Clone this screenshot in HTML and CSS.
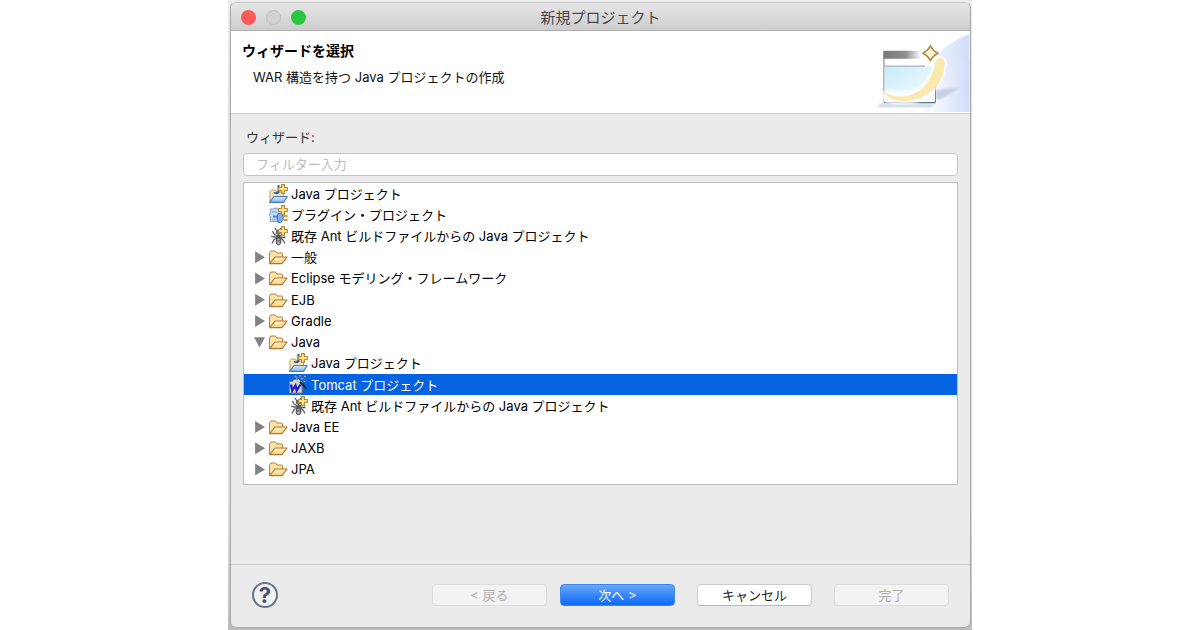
FILE: index.html
```html
<!DOCTYPE html>
<html lang="ja">
<head>
<meta charset="utf-8">
<meta name="viewport" content="width=device-width, initial-scale=1">
<title>新規プロジェクト</title>
<link rel="stylesheet" href="styles.css">
</head>
<body>
<svg class="defs" aria-hidden="true">
  <defs>
    <linearGradient id="gold" x1="0" y1="0" x2="0" y2="1"><stop offset="0" stop-color="#fff3cb"/><stop offset="1" stop-color="#f6cf7d"/></linearGradient>
    <linearGradient id="sky" x1="0" y1="0" x2="0" y2="1"><stop offset="0" stop-color="#d8eafc"/><stop offset="1" stop-color="#87b4ee"/></linearGradient>
    <symbol id="folder" viewBox="0 0 20 20">
      <path d="M1.500 16V6L3 4h4.500L9 6h4.500q1 0 1 1v3" fill="#fae3a8" stroke="#b7813b" stroke-linejoin="round"/>
      <path d="M1.700 16.700L7 10H19L14 16.700z" fill="url(#gold)" stroke="#b5772e" stroke-width="1.200" stroke-linejoin="round"/>
    </symbol>
    <symbol id="plus" viewBox="0 0 9 9">
      <path d="M3.200.6h2.600v2.600h2.600v2.600H5.800v2.600H3.200V5.800H.6V3.200h2.600z" fill="#ffe48c" stroke="#b98a30" stroke-linejoin="round"/>
    </symbol>
    <symbol id="java" viewBox="0 0 20 20">
      <path d="M2 17.500V7.500L3.500 6h4L9 8h6.500v5" fill="#fbe5b1" stroke="#c19a62"/>
      <path d="M1.500 18.300L6 12.500H19.300L15.500 18.300z" fill="url(#sky)" stroke="#4a7cc4" stroke-width="1.200" stroke-linejoin="round"/>
      <path d="M10.500 1v6q0 2.300-2 2.300-1.600 0-2.200-1.200" fill="none" stroke="#286496" stroke-width="2"/>
      <use href="#plus" x="10" y="0" width="10" height="10"/>
    </symbol>
    <symbol id="plugin" viewBox="0 0 20 20">
      <path d="M2.500 16.500V12q-2-1-.5-3l.5-5H6q2-2.500 4 0h4v12.500z" fill="#c2dbf6" stroke="#7b9dcc"/>
      <path d="M4 7h7M4 14.500h5" stroke="#9dc1ec" stroke-width="2"/>
      <path d="M5 11.500h5" stroke="#4b7fbe" stroke-width="2"/>
      <path d="M10 8.500h2.500q3 1 3 4t-3 5H10q-1.500-4.500 0-9z" fill="#79aff0" stroke="#4079bd"/>
      <path d="M15.500 11h4M15.500 15h4" stroke="#cf9a36" stroke-width="2"/>
      <use href="#plus" x="10" y="0" width="10" height="10"/>
    </symbol>
    <symbol id="ant" viewBox="0 0 20 20">
      <path d="M9.500 6L7 2M11 6l2-4M9.500 10L6 8 4.500 5M11.500 10l4-1 1.500 1M9.500 11L6 11 3 10M11.500 11.500h6M9.500 12L6 13.500 4 17.500M12 12l3 2 2 3.500" fill="none" stroke="#5c5c5c" stroke-width="1.300"/>
      <ellipse cx="10.500" cy="6.300" rx="2.300" ry="1.900" fill="#777" stroke="#444" stroke-width=".7"/>
      <ellipse cx="10.500" cy="10.500" rx="1.600" ry="2.200" fill="#555"/>
      <ellipse cx="10.500" cy="15.500" rx="2.400" ry="3.300" fill="#b0b0b0" stroke="#4b4b4b"/>
      <path d="M8.500 15h4" stroke="#4b4b4b"/>
      <use href="#plus" x="10" y="0" width="10" height="10"/>
    </symbol>
    <symbol id="tomcat" viewBox="0 0 20 20">
      <path d="M1.500 18V6.500h3L6 4.500h3L10.500 6.500H14V18z" fill="#dcd6cf" stroke="#92816b"/>
      <path d="M3 9.500l1.300 6L7.500 10.500l1.200 5L12.500 9.500" fill="none" stroke="#1b1bd0" stroke-width="2.300"/>
      <path d="M9.500 4.500l9 9" stroke="#27303d" stroke-width="2.400"/>
      <path d="M9.500 4.500l2.500 2.500" stroke="#dfe7f2" stroke-width="2"/>
      <path d="M13 3.500h2M16 1.500h2M12 0v2M6.500 1.500h2M15.500 6.500h2M8 3h1.500" stroke="#aaa18d" stroke-width="1.400"/>
    </symbol>
  </defs>
</svg>
<div class="desktop">
<main class="window">
  <header class="titlebar">
    <div class="lights">
      <button class="light close" aria-label="閉じる"></button>
      <button class="light minimize" aria-label="最小化" disabled></button>
      <button class="light expand" aria-label="拡大"></button>
    </div>
    <h1 class="title">新規プロジェクト</h1>
  </header>
  <section class="banner">
    <div class="banner-text">
      <h2 class="heading">ウィザードを選択</h2>
      <p class="description">WAR 構造を持つ Java プロジェクトの作成</p>
    </div>
    <svg class="banner-art" viewBox="0 0 94 83" aria-hidden="true">
      <defs>
        <linearGradient id="haze" x1="0" y1="0" x2="1" y2="0"><stop offset="0" stop-color="#fff"/><stop offset="1" stop-color="#d0dcf7"/></linearGradient>
        <linearGradient id="bar" x1="0" y1="0" x2="1" y2="0"><stop offset="0" stop-color="#777"/><stop offset=".5" stop-color="#8e8e8e"/><stop offset=".85" stop-color="#fff"/></linearGradient>
        <linearGradient id="pane" x1="0" y1="0" x2="1" y2="1"><stop offset="0" stop-color="#c6ebfb"/><stop offset="1" stop-color="#f8fdff"/></linearGradient>
        <filter id="soft" x="-20%" y="-20%" width="140%" height="140%"><feGaussianBlur stdDeviation="1"/></filter>
      </defs>
      <path d="M94 3Q68 13 56 31L42 82H94z" fill="url(#haze)"/>
      <path d="M94 27Q70 35 60 54l-7 28H94z" fill="url(#haze)" opacity=".6"/>
      <path d="M60 60l25-3-20 12H60zM2 74h58l-6 3H2z" fill="#bac3dc" opacity=".7" filter="url(#soft)"/>
      <path d="M7.500 21v51.500h52V31" fill="#fff" stroke="#667583"/>
      <path d="M7.500 72.500h52" stroke="#667583"/>
      <path d="M8 36h51v35H8z" fill="url(#pane)"/>
      <path d="M8 35.500h41" stroke="#8d9fac"/>
      <path d="M7 20h45v8H7z" fill="url(#bar)"/>
      <path d="M12 66Q35 71 48 61T64 33" fill="none" stroke="#fff" stroke-width="14" opacity=".8" stroke-linecap="round" filter="url(#soft)"/>
      <path d="M7 61Q19 69 34 65Q54 59 60 30Q65 23 69 31Q69 48 58 59Q45 71 28 71Q11 70 7 61z" fill="#f9e9ae"/>
      <circle cx="54" cy="22" r="10" fill="#fff" opacity=".8" filter="url(#soft)"/>
      <path d="M54.500 15Q57 20 62 22.500Q57 25 54.500 30Q52 25 47 22.500Q52 20 54.500 15z" fill="#fff5d4" stroke="#b18b45" stroke-width="1.500"/>
    </svg>
  </section>
  <form class="content">
    <label class="field-label" for="filter">ウィザード:</label>
    <input class="filter" id="filter" type="text" placeholder="フィルター入力">
    <ul class="tree" role="tree">
      <li class="row leaf" role="treeitem"><svg class="icon"><use href="#java"/></svg>Java プロジェクト</li>
      <li class="row leaf" role="treeitem"><svg class="icon"><use href="#plugin"/></svg>プラグイン・プロジェクト</li>
      <li class="row leaf" role="treeitem"><svg class="icon"><use href="#ant"/></svg>既存 Ant ビルドファイルからの Java プロジェクト</li>
      <li class="row" role="treeitem" aria-expanded="false"><button class="twisty" type="button" aria-label="展開"></button><svg class="icon"><use href="#folder"/></svg>一般</li>
      <li class="row" role="treeitem" aria-expanded="false"><button class="twisty" type="button" aria-label="展開"></button><svg class="icon"><use href="#folder"/></svg>Eclipse モデリング・フレームワーク</li>
      <li class="row" role="treeitem" aria-expanded="false"><button class="twisty" type="button" aria-label="展開"></button><svg class="icon"><use href="#folder"/></svg>EJB</li>
      <li class="row" role="treeitem" aria-expanded="false"><button class="twisty" type="button" aria-label="展開"></button><svg class="icon"><use href="#folder"/></svg>Gradle</li>
      <li class="row" role="treeitem" aria-expanded="true"><button class="twisty open" type="button" aria-label="折りたたむ"></button><svg class="icon"><use href="#folder"/></svg>Java</li>
      <li class="row child" role="treeitem" aria-level="2"><svg class="icon"><use href="#java"/></svg>Java プロジェクト</li>
      <li class="row child selected" role="treeitem" aria-level="2" aria-selected="true"><svg class="icon"><use href="#tomcat"/></svg>Tomcat プロジェクト</li>
      <li class="row child" role="treeitem" aria-level="2"><svg class="icon"><use href="#ant"/></svg>既存 Ant ビルドファイルからの Java プロジェクト</li>
      <li class="row" role="treeitem" aria-expanded="false"><button class="twisty" type="button" aria-label="展開"></button><svg class="icon"><use href="#folder"/></svg>Java EE</li>
      <li class="row" role="treeitem" aria-expanded="false"><button class="twisty" type="button" aria-label="展開"></button><svg class="icon"><use href="#folder"/></svg>JAXB</li>
      <li class="row" role="treeitem" aria-expanded="false"><button class="twisty" type="button" aria-label="展開"></button><svg class="icon"><use href="#folder"/></svg>JPA</li>
    </ul>
  </form>
  <footer class="actions">
    <button class="help" aria-label="ヘルプ">?</button>
    <div class="steps">
      <button class="button" disabled>&lt; 戻る</button>
      <button class="button primary">次へ &gt;</button>
    </div>
    <button class="button">キャンセル</button>
    <button class="button" disabled>完了</button>
  </footer>
</main>
</div>
</body>
</html>
```
FILE: styles.css
```css
* { box-sizing: border-box; }

body {
  margin: 0;
  background: #fff;
  color: #111;
  font: 13px/20px Inter, "Noto Sans CJK JP", sans-serif;
}

button, input { font: inherit; }

.defs { position: absolute; width: 0; height: 0; }

.desktop {
  display: flex;
  max-width: 744px;
  min-height: 100vh;
  margin: 0 auto;
  padding: 2px 1px 2px 2px;
  background: linear-gradient(#ececec, #dedede 20%, #dcdcdc 80%, #bcbcbc);
}

.window {
  display: flex;
  flex: 1;
  flex-direction: column;
  min-width: 0;
  overflow: hidden;
  background: #ebebeb;
  border: 1px solid #a9a9a9;
  border-top-color: #c8c8c8;
  border-radius: 6px;
}

.titlebar {
  display: grid;
  grid-template-columns: 1fr auto 1fr;
  align-items: center;
  height: 28px;
  padding: 2px 10px 0;
  background: linear-gradient(#e6e6e6, #cdcdcd);
  border-bottom: 1px solid #b1b1b1;
}

.lights { display: flex; gap: 10px; }

.light {
  width: 15px;
  height: 15px;
  padding: 0;
  border: 0;
  border-radius: 50%;
}

.close { background: #fc5b57; }
.minimize { background: #d1d1d1; border: 1px solid #bfbfbf; }
.expand { background: #28c83f; }

.title {
  margin: 0;
  color: #454545;
  font-size: 15px;
  font-weight: 400;
}

.banner {
  display: flex;
  justify-content: space-between;
  height: 83px;
  background: #fff;
  border-bottom: 1px solid #cfcfcf;
}

.banner-text { padding: 10px 11px; }

.heading {
  margin: 0;
  color: #000;
  font-size: 14px;
  font-weight: 700;
}

.description { margin: 6px 0 0 11px; }

.banner-art { width: 94px; height: 82px; }

.content {
  display: flex;
  flex: 1;
  flex-direction: column;
  padding: 13px 12px;
}

.field-label { padding-left: 3px; color: #333; }

.filter {
  width: 100%;
  height: 23px;
  margin: 6px 0;
  padding: 0 12px 2px;
  background: #fff;
  border: 1px solid #c4c4c4;
  border-radius: 4px;
}

.filter::placeholder { color: #bcbcbc; }

.tree {
  display: grid;
  grid-auto-rows: 1fr;
  min-height: 303px;
  margin: 0;
  padding: 0 0 4px;
  list-style: none;
  background: #fff;
  border: 1px solid #bdbdbd;
}

.row {
  display: flex;
  align-items: center;
  padding-left: 10px;
  color: #000;
  white-space: nowrap;
}

.leaf { padding-left: 24px; }
.child { padding-left: 44px; }
.selected { background: #0563e1; color: #fff; }

.icon { flex: none; width: 20px; height: 20px; margin-right: 3px; }

.twisty {
  width: 11px;
  height: 12px;
  margin-right: 3px;
  padding: 0;
  background: #828282;
  border: 0;
  clip-path: polygon(10% 0, 100% 50%, 10% 100%);
}

.twisty.open { clip-path: polygon(0 10%, 100% 10%, 50% 95%); }

.actions {
  display: flex;
  align-items: center;
  gap: 22px;
  height: 63px;
  padding: 0 21px 2px;
}

.actions { border-top: 1px solid #cdcdcd; }

.help {
  width: 26px;
  height: 26px;
  margin-right: auto;
  padding: 0;
  background: #f2f3f5;
  border: 2px solid #68748c;
  border-radius: 50%;
  color: #46546f;
  font-size: 22px;
  font-weight: 700;
  line-height: 22px;
}

.steps { display: flex; gap: 13px; }

.button {
  width: 115px;
  height: 22px;
  padding: 0;
  background: #fff;
  border: 1px solid #cdcdcd;
  border-bottom-color: #b9b9b9;
  border-radius: 4px;
  color: #222;
}

.button:disabled {
  background: #f3f3f3;
  border-color: #dcdcdc;
  color: #b1b1b1;
}

.primary {
  background: linear-gradient(#68a8fb, #0d67f8);
  border-color: #3c86ee;
  color: #fff;
}
```
